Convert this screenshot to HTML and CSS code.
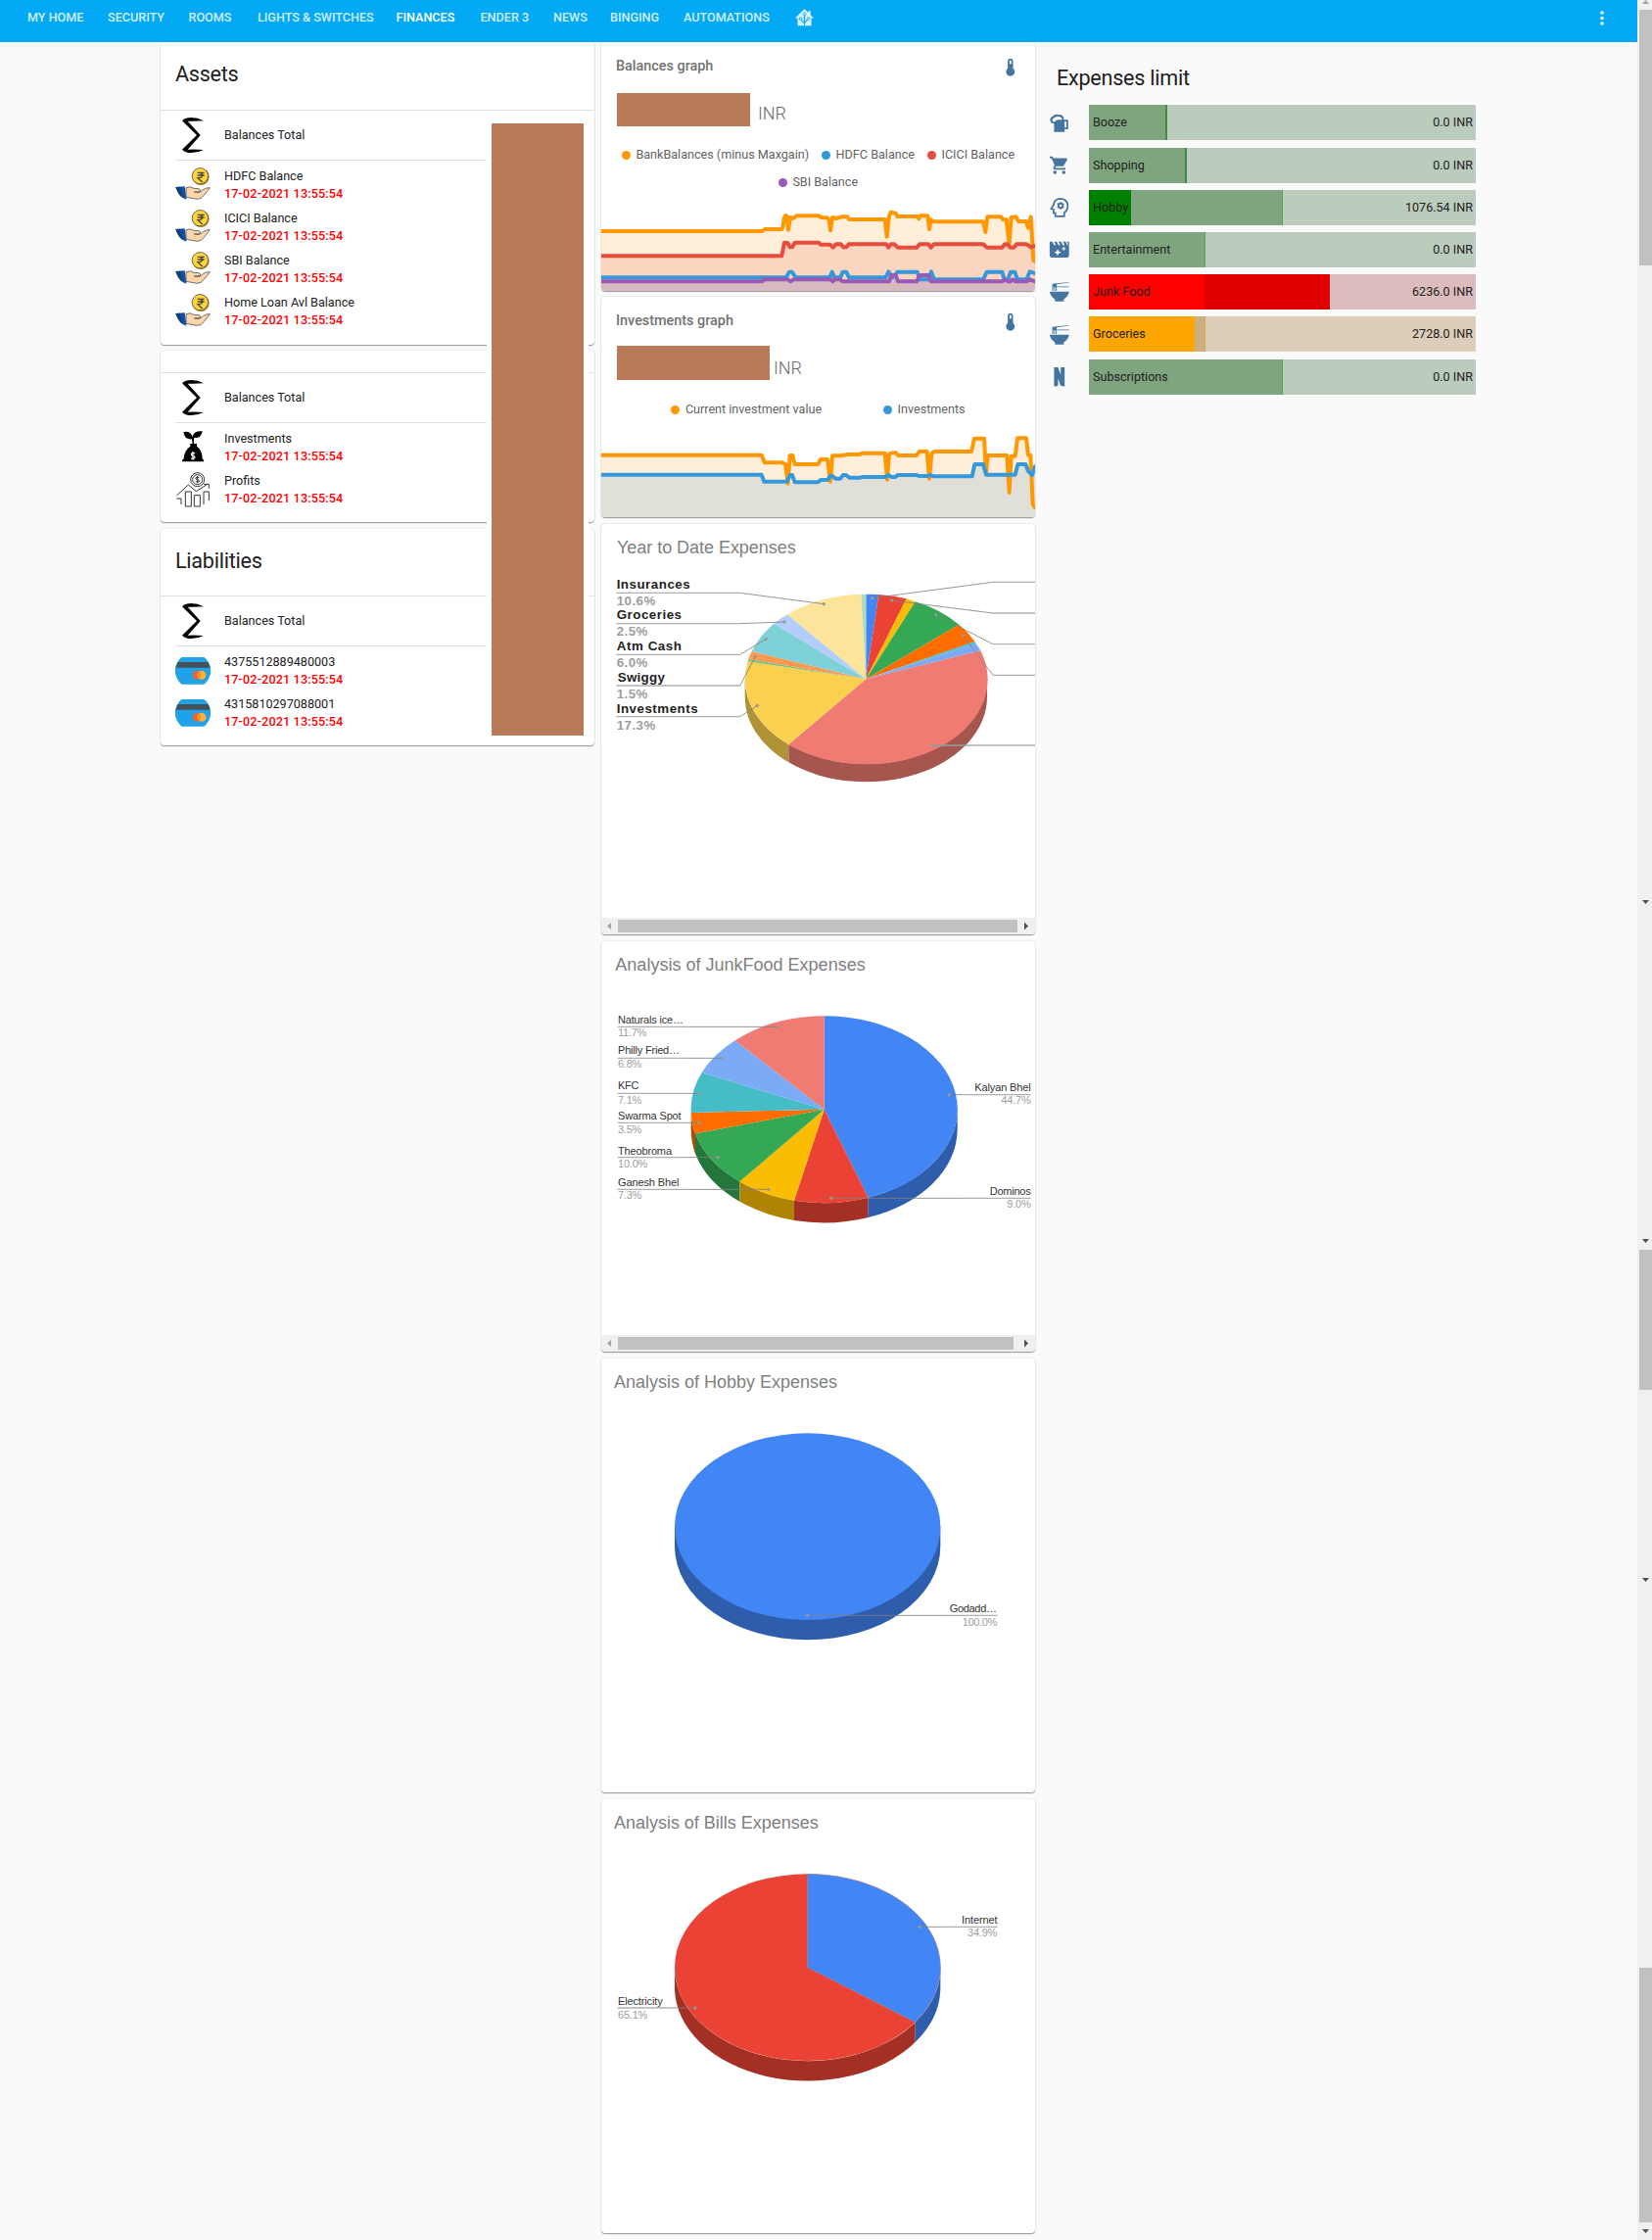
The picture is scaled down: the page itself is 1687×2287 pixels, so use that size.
FILE: index.html
```html
<!DOCTYPE html>
<html lang="en">
<head>
<meta charset="utf-8">
<title>Finances</title>
<link rel="stylesheet" href="styles.css">
</head>
<body>
<svg class="defs" width="0" height="0" aria-hidden="true">
  <symbol id="sigma" viewBox="0 0 108 108"><path d="M87 10Q68 0 49 0Q30 0 21 10L66 54L21 98Q30 108 49 108Q68 108 87 99Q62 96 38 98L77 54L38 11Q62 12 87 10Z"/></symbol>
  <symbol id="hand" viewBox="0 0 108 108">
    <circle cx="78" cy="28" r="26" fill="#a98216"/><circle cx="76" cy="26" r="24.500" fill="#fdd43c" stroke="#555" stroke-width="2.500"/>
    <path d="M68 16H89M68 24H89M69 16H75Q83 17 83 24Q82 32 69 32L83 45" fill="none" stroke="#444" stroke-width="4"/>
    <path d="M33 62Q47 56 57 64L72 65Q80 67 76 74L58 75Q75 80 85 68Q95 61 106 62Q98 73 89 84Q79 97 68 97L33 91Z" fill="#fcd5aa" stroke="#555" stroke-width="2.500"/>
    <path d="M1 60L29 58L34 98Q13 94 1 60Z" fill="#0f50a0"/><path d="M1 60L15 59L22 92Q9 85 1 60Z" fill="#153e74"/>
  </symbol>
  <symbol id="bag" viewBox="0 0 108 108"><path d="M51 28Q28 30 25 7Q44 1 53 20Q58 1 83 4Q81 25 57 25V42H66V50Q83 62 83 88L87 92V97H21V92L26 88Q27 63 46 50V42H53Z"/><path d="M60 72Q54 68 50 72Q47 77 54 79Q62 81 59 86Q55 90 48 86M54 66V92" fill="none" stroke="#fff" stroke-width="3.500"/></symbol>
  <symbol id="profit" viewBox="0 0 108 108"><g fill="none" stroke="#333" stroke-width="3"><circle cx="68" cy="23" r="21"/><circle cx="68" cy="23" r="15"/><path d="M4 72L40 39L64 59L100 36M87 37H103V50M4 81H18V99M31 105V60H49V105ZM58 105V71H76V105ZM87 99V60H103V87"/><path d="M74 18Q68 13 63 17Q60 22 68 23Q76 25 73 29Q68 33 62 28M68 12V34"/></g></symbol>
  <symbol id="credit" viewBox="0 0 108 108"><path d="M20 12H88Q101 20 108 44V63Q101 86 88 95H20Q7 86 0 63V44Q7 20 20 12Z" fill="#1fa2e8"/><path d="M8 27H100Q105 34 106 44H2Q4 34 8 27Z" fill="#455058"/><circle cx="67" cy="67" r="13.500" fill="#f0642f"/><circle cx="81" cy="67" r="13.500" fill="#fbb13c"/><path d="M74 56Q82 67 74 78Q66 67 74 56Z" fill="#f68a1e"/></symbol>
  <symbol id="thermo" viewBox="0 0 24 24"><path d="M15 13V5A3 3 0 0 0 9 5V13A5 5 0 1 0 15 13M12 4A1 1 0 0 1 13 5V8H11V5A1 1 0 0 1 12 4Z"/></symbol>
  <symbol id="mug" viewBox="0 0 24 24"><path d="M2 10A4 4 0 0 1 4.500 4.300Q7 1 11 2.500Q15 1 17 5.500V8H22V19H18V22H6V12Q3 13 2 10ZM18 10V17H20V10ZM4 9Q4.500 11 7 10.300Q8 7.500 12 8H15Q15 4.500 10.500 4.500Q7.500 4 6 6.200Q4 6 4 9Z" fill-rule="evenodd"/></symbol>
  <symbol id="cart" viewBox="0 0 24 24"><path d="M17,18C15.890,18 15,18.890 15,20A2,2 0 0,0 17,22A2,2 0 0,0 19,20C19,18.890 18.100,18 17,18M1,2V4H3L6.600,11.590L5.240,14.040C5.090,14.320 5,14.650 5,15A2,2 0 0,0 7,17H19V15H7.420A0.250,0.250 0 0,1 7.170,14.750C7.170,14.700 7.180,14.660 7.200,14.630L8.100,13H15.550C16.300,13 16.960,12.580 17.300,11.970L20.880,5.500C20.950,5.340 21,5.170 21,5A1,1 0 0,0 20,4H5.210L4.270,2M7,18C5.890,18 5,18.890 5,20A2,2 0 0,0 7,22A2,2 0 0,0 9,20C9,18.890 8.100,18 7,18Z"/></symbol>
  <symbol id="head" viewBox="0 0 24 24"><path d="M7.500 22V18.500H5.500V14.500L2.800 13.500L5.300 9.500Q6 2 13.500 2Q21.500 2.500 21.500 10.500Q21.500 15 17.500 18V22Z" fill="none" stroke="#4474a0" stroke-width="2"/><circle cx="13.500" cy="10" r="2.500" fill="none" stroke="#4474a0" stroke-width="2"/><path d="M12.700 5.800H14.300V14.200H12.700ZM9.500 8.700L10.300 7.300L17.500 11.300L16.700 12.700ZM16.700 7.300L17.500 8.700L10.300 12.700L9.500 11.300Z"/><circle cx="13.500" cy="10" r="1.500" fill="#fafafa"/></symbol>
  <symbol id="movie" viewBox="0 0 24 24"><path d="M1 3H4L6 7H8L6 3H9L11 7H13L11 3H14L16 7H18L16 3H19L21 7H22L20.500 3H23V19Q23 21 21 21H3Q1 21 1 19ZM10 11L9 14L6 15.200L9 16.400L10 19.500L11.200 16.400L14.200 15.200L11.200 14ZM17 8L16.200 10.200L14 11L16.200 11.800L17 14L17.800 11.800L20 11L17.800 10.200Z" fill-rule="evenodd"/></symbol>
  <symbol id="bowl" viewBox="0 0 24 24"><path d="M1 12H23Q22 18 17 20.500V23H7V20.500Q2 18 1 12ZM4 3L23 1V1.700L9 3.500V6H23V7H9V11H8V7H7V11H6V7H5V11H4Z"/></symbol>
  <symbol id="netflix" viewBox="0 0 24 24"><path d="M6 1H10.500L13.500 9.500V1H18V23L13.500 22L10.500 14V22L6 23Z"/></symbol>
</svg>
<div class="page">
  <header class="bar">
    <nav class="tabs">
      <a>MY HOME</a><a>SECURITY</a><a>ROOMS</a><a>LIGHTS &amp; SWITCHES</a><a class="on">FINANCES</a><a>ENDER 3</a><a>NEWS</a><a>BINGING</a><a>AUTOMATIONS</a>
      <a><svg width="19" height="18" viewBox="0 0 24 23"><path d="M12 0L17 5V3H20V8L24 12H21V22H3V12H0Z" fill="#d8f1fe"/><path d="M12 22V6M12 19L7 14M12 18L17 13" fill="none" stroke="#03a9f4" stroke-width="1.500"/><g fill="#d8f1fe" stroke="#03a9f4" stroke-width="1.200"><circle cx="12" cy="7" r="1.700"/><circle cx="7" cy="13" r="1.700"/><circle cx="17" cy="13" r="1.700"/></g></svg></a>
    </nav>
    <svg class="more" width="4" height="16" viewBox="0 0 4 16" fill="#fff"><circle cx="2" cy="2" r="1.800"/><circle cx="2" cy="7.500" r="1.800"/><circle cx="2" cy="13" r="1.800"/></svg>
  </header>
  <main class="columns">
    <section class="col first">
      <article class="card">
        <h2 class="head h69">Assets</h2>
        <div class="total"><svg><use href="#sigma"/></svg><span>Balances Total</span></div>
        <div class="rows">
          <div class="row"><svg><use href="#hand"/></svg><p>HDFC Balance<b>17-02-2021 13:55:54</b></p></div>
          <div class="row"><svg><use href="#hand"/></svg><p>ICICI Balance<b>17-02-2021 13:55:54</b></p></div>
          <div class="row"><svg><use href="#hand"/></svg><p>SBI Balance<b>17-02-2021 13:55:54</b></p></div>
          <div class="row"><svg><use href="#hand"/></svg><p>Home Loan Avl Balance<b>17-02-2021 13:55:54</b></p></div>
        </div>
      </article>
      <article class="card second">
        <div class="head h22"></div>
        <div class="total"><svg><use href="#sigma"/></svg><span>Balances Total</span></div>
        <div class="rows">
          <div class="row"><svg><use href="#bag"/></svg><p>Investments<b>17-02-2021 13:55:54</b></p></div>
          <div class="row"><svg><use href="#profit"/></svg><p>Profits<b>17-02-2021 13:55:54</b></p></div>
        </div>
      </article>
      <article class="card third">
        <h2 class="head h68">Liabilities</h2>
        <div class="total"><svg><use href="#sigma"/></svg><span>Balances Total</span></div>
        <div class="rows">
          <div class="row"><svg><use href="#credit"/></svg><p>4375512889480003<b>17-02-2021 13:55:54</b></p></div>
          <div class="row"><svg><use href="#credit"/></svg><p>4315810297088001<b>17-02-2021 13:55:54</b></p></div>
        </div>
      </article>
      <div class="mask"></div>
    </section>

    <section class="col">
      <article class="card graph g1">
        <div class="gtitle"><span>Balances graph</span><svg><use href="#thermo"/></svg></div>
        <div class="value"><i class="w136"></i><span>INR</span></div>
        <div class="legend l1"><span class="o">BankBalances (minus Maxgain)</span><span class="b">HDFC Balance</span><span class="r">ICICI Balance</span></div>
        <div class="legend l2"><span class="p">SBI Balance</span></div>
        <svg class="plot" height="90" viewBox="42 500 1329 270" preserveAspectRatio="none">
          <path fill="#ffefda" d="M42 587H535L543 581H597L604 541H713L800 551H915L928 530L950 542H1045L1060 557H1215L1225 542H1270L1371 555V770H42Z"/>
          <path fill="#fad5c0" d="M42 663H597L604 622H708L745 632H1371V770H42Z"/>
          <path fill="#d7bac0" d="M42 735H1371V770H42Z"/>
          <g fill="none" stroke-width="12" stroke-linejoin="round" stroke-linecap="round">
          <path stroke="#ff9800" d="M42 587H535L543 581H595Q600 575 602 548Q605 536 611 541L615 583L621 545L630 548L640 540H708L718 546H735Q740 548 744 585L750 545L762 548L778 543H796L801 551H911L917 604L923 545L929 529L944 532L949 542H1010L1015 549L1020 540H1042L1047 581L1052 552L1060 558H1212L1219 590L1225 543H1266L1273 552H1283L1292 626L1298 545L1312 543L1320 557H1343L1350 577L1358 543L1366 677L1372 680"/>
          <path stroke="#e74c3c" d="M42 663H595L603 622H612L620 636H627L635 622H708L714 628H743L752 637L761 627H776L784 636H792L800 627H915L922 637L929 627H940L950 637H1009L1017 627H1044L1052 637L1061 627H1212L1224 637H1270L1278 627H1286L1295 637H1306L1314 627H1345L1358 636L1371 632"/>
          <path stroke="#3498db" d="M42 729H608L618 712H627L637 729H742L749 712L757 729H774L782 712H793L801 729H913L922 711L935 729L950 712H1010L1018 735H1044L1053 711L1062 735H1212L1223 712H1270L1277 735H1288L1296 712H1309L1317 735H1345L1355 711L1371 716"/>
          <path stroke="#9b59b6" d="M42 741H534L542 735H614L622 741L631 735H744L751 741L758 735H774L781 741H924L930 722H944L951 741H1009L1017 722H1045L1052 741H1270L1279 735L1288 741H1295L1303 735L1311 741H1345L1355 735L1371 741"/>
          </g>
        </svg>
      </article>
      <article class="card graph g2">
        <div class="gtitle"><span>Investments graph</span><svg><use href="#thermo"/></svg></div>
        <div class="value v2"><i class="w156"></i><span>INR</span></div>
        <div class="legend l3"><span class="o">Current investment value</span><span class="b">Investments</span></div>
        <svg class="plot" height="88" viewBox="42 451 1329 264" preserveAspectRatio="none">
          <path fill="#ffefda" d="M42 525H535L543 549H600L613 610L624 525L635 554H706L715 538H735L744 605L752 527H780L840 519H910L917 600L924 519H940L950 526H1008L1017 514H1040L1047 598L1057 514H1178L1186 474H1215L1221 525H1285L1292 640L1300 525H1312L1320 474H1343L1350 530L1371 680V715H42Z"/>
          <path fill="#e0e0d8" d="M42 585H535L542 606H706L748 590H1178L1186 553H1212L1220 585H1310L1320 553H1343L1371 565V715H42Z"/>
          <g fill="none" stroke-width="12" stroke-linejoin="round" stroke-linecap="round">
          <path stroke="#ff9800" d="M42 525H533L543 548H596L606 553L614 612L620 526H628L635 553H706L714 538H735L744 606L750 527H775L799 523H833L840 519H911L918 600L924 521L935 518L945 518L951 526H1008L1016 514H1040L1047 597L1054 520L1062 514H1176L1185 474H1215L1221 580L1226 526H1285L1292 640L1298 528H1310L1317 473H1344L1350 525H1357L1364 675L1370 685"/>
          <path stroke="#3498db" d="M42 585H533L541 606H610L621 586H627L635 608H706L714 601H735L744 589H750L760 597H774L783 586H792L802 594H835L843 592H912L921 586L932 592H942L951 586H1008L1015 589H1042L1050 586L1061 590H1178L1186 553H1212L1221 585H1310L1318 553H1342L1350 574L1362 586L1371 560"/>
          </g>
        </svg>
      </article>

      <article class="card pie ytd">
        <svg width="443" height="402" viewBox="42 15 1329 1206">
          <text class="t" x="90" y="105" textLength="548">Year to Date Expenses</text>
          <path fill="#b09335" d="M482 490A371 260 0 0 0 616 690V745A371 260 0 0 1 482 545Z"/>
          <path fill="#a6564e" d="M1224 490A371 260 0 0 1 616 690V745A371 260 0 0 0 1224 545Z"/>
          <path fill="#4285f4" d="M853 490V230A371 260 0 0 1 892 231Z"/>
          <path fill="#ea4335" d="M853 490L892 231A371 260 0 0 1 977 244Z"/>
          <path fill="#fbbc04" d="M853 490L977 244A371 260 0 0 1 1004 253Z"/>
          <path fill="#34a853" d="M853 490L1004 253A371 260 0 0 1 1138 323Z"/>
          <path fill="#ff6d01" d="M853 490L1138 323A371 260 0 0 1 1187 375Z"/>
          <path fill="#46bdc6" d="M853 490L1187 375A371 260 0 0 1 1190 381Z"/>
          <path fill="#7baaf7" d="M853 490L1190 381A371 260 0 0 1 1204 403Z"/>
          <path fill="#f07b72" d="M853 490L1204 403A371 260 0 0 1 616 690Z"/>
          <path fill="#fcd04f" d="M853 490L616 690A371 260 0 0 1 491 436Z"/>
          <path fill="#71c287" d="M853 490L491 436A371 260 0 0 1 493 429Z"/>
          <path fill="#ff994d" d="M853 490L493 429A371 260 0 0 1 503 405Z"/>
          <path fill="#7ed1d7" d="M853 490L503 405A371 260 0 0 1 571 320Z"/>
          <path fill="#b3cefb" d="M853 490L571 320A371 260 0 0 1 612 292Z"/>
          <path fill="#fde49b" d="M853 490L612 292A371 260 0 0 1 838 230Z"/>
          <path fill="#aedcba" d="M853 490L838 230H853Z"/>
          <g class="rule"><path d="M88 226H467M88 320H467M88 415H467M88 510H467M88 605H467M1242 193H1371M1242 288H1371M1242 383H1371M1242 478H1371M1057 693H1371"/></g>
          <g class="lead"><path d="M467 226L724 260M467 320L603 315M467 415L547 367M467 510L514 421M467 605L520 571M872 242L1242 193M932 249L1242 288M1067 293L1242 383M1150 356L1242 478M1057 693H1160"/></g>
          <g class="dots"><circle cx="724" cy="260" r="5"/><circle cx="603" cy="315" r="5"/><circle cx="547" cy="367" r="5"/><circle cx="514" cy="421" r="5"/><circle cx="520" cy="571" r="5"/><circle cx="872" cy="242" r="5"/><circle cx="932" cy="249" r="5"/><circle cx="1067" cy="293" r="5"/><circle cx="1150" cy="356" r="5"/><circle cx="1057" cy="693" r="5"/></g>
          <g class="big"><text x="89" y="213" textLength="225">Insurances</text><text x="89" y="307" textLength="199">Groceries</text><text x="89" y="403" textLength="199">Atm Cash</text><text x="92" y="497" textLength="145">Swiggy</text><text x="89" y="593" textLength="249">Investments</text></g>
          <g class="big pct"><text x="89" y="264" textLength="119">10.6%</text><text x="89" y="358" textLength="95">2.5%</text><text x="89" y="454" textLength="95">6.0%</text><text x="89" y="548" textLength="95">1.5%</text><text x="89" y="644" textLength="119">17.3%</text></g>
        </svg>
        <svg class="hbar" width="443" height="17"><path fill="#c1c1c1" d="M17 2H425V15H17Z"/><path fill="#a3a3a3" d="M6 8.500L10 5V12Z"/><path fill="#505050" d="M436 8.500L432 4.500V12.500Z"/></svg>
      </article>

      <article class="card pie">
        <svg width="443" height="402" viewBox="42 3 1329 1206">
          <text class="t" x="85" y="93" textLength="766">Analysis of JunkFood Expenses</text>
          <path fill="#b34d01" d="M317 518A408 286 0 0 0 330 592V653A408 286 0 0 1 317 579Z"/>
          <path fill="#24763a" d="M330 592A408 286 0 0 0 466 739V800A408 286 0 0 1 330 653Z"/>
          <path fill="#b08403" d="M466 739A408 286 0 0 0 633 797V858A408 286 0 0 1 466 800Z"/>
          <path fill="#a42f25" d="M633 797A408 286 0 0 0 860 788V849A408 286 0 0 1 633 858Z"/>
          <path fill="#2e5dab" d="M860 788A408 286 0 0 0 1133 518V579A408 286 0 0 1 860 849Z"/>
          <path fill="#4285f4" d="M725 518V232A408 286 0 0 1 860 788Z"/>
          <path fill="#ea4335" d="M725 518L860 788A408 286 0 0 1 633 797Z"/>
          <path fill="#fbbc04" d="M725 518L633 797A408 286 0 0 1 466 739Z"/>
          <path fill="#34a853" d="M725 518L466 739A408 286 0 0 1 330 592Z"/>
          <path fill="#ff6d01" d="M725 518L330 592A408 286 0 0 1 317 528Z"/>
          <path fill="#46bdc6" d="M725 518L317 528A408 286 0 0 1 350 405Z"/>
          <path fill="#7baaf7" d="M725 518L350 405A408 286 0 0 1 452 307Z"/>
          <path fill="#f07b72" d="M725 518L452 307A408 286 0 0 1 725 232Z"/>
          <g class="rule"><path d="M92 265H302M92 361H302M92 469H302M92 559H302M92 665H302M92 763H302M1150 473H1358M1150 790H1358"/></g>
          <g class="lead"><path d="M302 265H585M302 361H410M302 469H344M302 559H342M302 665H399M302 763H554M1107 473H1150M746 790H1150"/></g>
          <g class="dots"><circle cx="585" cy="265" r="5"/><circle cx="410" cy="361" r="5"/><circle cx="344" cy="469" r="5"/><circle cx="342" cy="559" r="5"/><circle cx="399" cy="665" r="5"/><circle cx="554" cy="763" r="5"/><circle cx="1107" cy="473" r="5"/><circle cx="746" cy="790" r="5"/></g>
          <g class="lab"><text x="93" y="256" textLength="201">Naturals ice…</text><text x="93" y="349" textLength="189">Philly Fried…</text><text x="93" y="457" textLength="64">KFC</text><text x="93" y="548" textLength="194">Swarma Spot</text><text x="93" y="656" textLength="165">Theobroma</text><text x="93" y="753" textLength="187">Ganesh Bhel</text><text x="1186" y="463" textLength="172">Kalyan Bhel</text><text x="1232" y="780" textLength="126">Dominos</text></g>
          <g class="lab pct"><text x="93" y="295" textLength="88">11.7%</text><text x="93" y="391" textLength="73">6.8%</text><text x="93" y="500" textLength="73">7.1%</text><text x="93" y="590" textLength="73">3.5%</text><text x="93" y="695" textLength="91">10.0%</text><text x="93" y="792" textLength="73">7.3%</text><text x="1267" y="502" textLength="91">44.7%</text><text x="1285" y="819" textLength="73">9.0%</text></g>
        </svg>
        <svg class="hbar" width="443" height="17"><path fill="#c1c1c1" d="M17 2H421V15H17Z"/><path fill="#a3a3a3" d="M6 8.500L10 5V12Z"/><path fill="#505050" d="M436 8.500L432 4.500V12.500Z"/></svg>
      </article>

      <article class="card pie tall">
        <svg width="443" height="443" viewBox="42 21 1329 1329">
          <text class="t" x="81" y="111" textLength="684">Analysis of Hobby Expenses</text>
          <path fill="#2e5dab" d="M267 536V597A407 286 0 0 0 1081 597V536Z"/>
          <ellipse cx="674" cy="536" rx="407" ry="286" fill="#4285f4"/>
          <g class="rule"><path d="M1097 808H1256"/></g><g class="lead"><path d="M674 808H1097"/></g><g class="dots"><circle cx="674" cy="808" r="5"/></g>
          <g class="lab"><text x="1109" y="798" textLength="145">Godadd…</text></g><g class="lab pct"><text x="1148" y="840" textLength="107">100.0%</text></g>
        </svg>
      </article>

      <article class="card pie tall">
        <svg width="443" height="443" viewBox="42 51 1329 1329">
          <text class="t" x="81" y="141" textLength="626">Analysis of Bills Expenses</text>
          <path fill="#a42f25" d="M267 566A407 286 0 0 0 1004 734V795A407 286 0 0 1 267 627Z"/>
          <path fill="#2e5dab" d="M1081 566A407 286 0 0 1 1004 734V795A407 286 0 0 0 1081 627Z"/>
          <ellipse cx="674" cy="566" rx="407" ry="286" fill="#ea4335"/>
          <path fill="#4285f4" stroke="#b8919a" stroke-width="1.500" d="M674 566V280A407 286 0 0 1 1004 734Z"/>
          <g class="rule"><path d="M1097 442H1256M92 690H250"/></g><g class="lead"><path d="M1018 442H1097M250 690H330"/></g><g class="dots"><circle cx="1018" cy="442" r="5"/><circle cx="330" cy="690" r="5"/></g>
          <g class="lab"><text x="1146" y="433" textLength="110">Internet</text><text x="93" y="681" textLength="137">Electricity</text></g><g class="lab pct"><text x="1164" y="472" textLength="91">34.9%</text><text x="93" y="722" textLength="91">65.1%</text></g>
        </svg>
      </article>
    </section>

    <section class="col limits">
      <h2>Expenses limit</h2>
      <div class="limit"><svg><use href="#mug"/></svg><div class="track green"><i class="target thick" style="width:20.250%"></i><span>Booze</span><span>0.0 INR</span></div></div>
      <div class="limit"><svg><use href="#cart"/></svg><div class="track green"><i class="target thick" style="width:25.300%"></i><span>Shopping</span><span>0.0 INR</span></div></div>
      <div class="limit"><svg><use href="#head"/></svg><div class="track green"><i class="target" style="width:50.100%"></i><i class="used" style="width:10.900%"></i><span>Hobby</span><span>1076.54 INR</span></div></div>
      <div class="limit"><svg><use href="#movie"/></svg><div class="track green"><i class="target" style="width:30.130%"></i><span>Entertainment</span><span>0.0 INR</span></div></div>
      <div class="limit"><svg><use href="#bowl"/></svg><div class="track red"><i class="over" style="width:62.300%"></i><i class="used" style="width:29.900%"></i><span>Junk Food</span><span>6236.0 INR</span></div></div>
      <div class="limit"><svg><use href="#bowl"/></svg><div class="track amber"><i class="target" style="width:30.130%"></i><i class="used" style="width:27.350%"></i><span>Groceries</span><span>2728.0 INR</span></div></div>
      <div class="limit"><svg><use href="#netflix"/></svg><div class="track green"><i class="target" style="width:50.100%"></i><span>Subscriptions</span><span>0.0 INR</span></div></div>
    </section>
  </main>
</div>
<aside class="rail"><svg width="15" height="2287"><g fill="#c1c1c1"><path d="M2 10H15V271H2ZM2 1276H15V1419H2ZM2 2009H15V2269H2Z"/></g><path fill="#a3a3a3" d="M5 4L8.500 0L12 4Z"/><path fill="#505050" d="M5 919H12L8.500 923ZM5 1265H12L8.500 1269ZM5 1611H12L8.500 1615ZM5 2276H12L8.500 2280Z"/></svg></aside>
</body>
</html>
```
FILE: styles.css
```css
* { box-sizing: border-box; }
body { margin: 0; display: flex; width: 1687px; height: 2287px; overflow: hidden; background: #fafafa; color: #212121; font: 12.6px/18px Roboto, sans-serif; }
h2, p { margin: 0; font-weight: 400; }
svg { display: block; flex: none; }
.defs { position: absolute; }
.page { width: 1672px; }
.rail { width: 15px; background: #f0f0f0; }

.bar { height: 43px; background: #03a9f4; display: flex; justify-content: space-between; padding: 9px 34px 0 28px; }
.tabs { display: grid; grid-template-columns: 82px 82.5px 70.5px 141.5px 86px 74.5px 58px 75px 113.5px 30px; }
.tabs a { color: #d0effd; font-weight: 500; white-space: nowrap; }
.tabs .on { color: #fff; }
.more { margin-top: 2px; }

.columns { display: grid; grid-template-columns: 443px 443px 443px; column-gap: 7px; padding-left: 164px; }
.card { background: #fff; border-radius: 4px; box-shadow: 0 1px 1px rgba(0,0,0,.38), 0 0 2px rgba(0,0,0,.15); }
.first { position: relative; }
.second { margin-top: 6px; }
.third { margin-top: 7px; }
.head { font-size: 21.6px; letter-spacing: -.012em; padding: 0 15px; line-height: 66px; }
.h69 { height: 69px; }
.h68 { height: 68px; }
.h22 { height: 22px; }
.head + .total { border-top: 1px solid #e0e0e0; }
.total { display: flex; align-items: center; gap: 14px; height: 51px; padding: 7px 15px; }
.total svg, .row svg { width: 36px; height: 36px; }
.rows { margin: 0 15px; border-top: 1px solid #e0e0e0; padding: 7px 0 15px; display: flex; flex-direction: column; gap: 7px; }
.row { display: flex; gap: 14px; height: 36px; }
.row b { display: block; color: #f00; font-weight: 500; letter-spacing: .15px; }
.card:first-child .rows { padding-bottom: 16px; }
.mask { position: absolute; left: 333px; top: 79px; width: 104px; height: 634px; background: #b97a57; border: 4px solid #fff; border-width: 4px 5px 5px; }

.graph { overflow: hidden; color: #636363; }
.g1 { height: 254px; }
.g2 { height: 225px; margin-top: 6px; }
.gtitle { display: flex; justify-content: space-between; height: 42px; padding: 15px 14px 0 15px; font-size: 14.4px; font-weight: 500; color: #727272; }
.gtitle span { padding-top: 1px; }
.gtitle svg { width: 21.6px; height: 21.6px; fill: #4474a0; }
.value { display: flex; gap: 8px; height: 59px; padding: 10px 0 0 16px; font-size: 18px; color: #6c6c6c; font-weight: 300; }
.value i { height: 34px; background: #b97a57; }
.value span { padding-top: 12px; }
.w136 { width: 136px; }
.w156 { width: 156px; }
.v2 { gap: 4px; padding-top: 8px; }
.v2 i { height: 35px; }
.v2 span { padding-top: 14px; }
.legend { display: flex; height: 28px; align-items: center; justify-content: center; }
.legend span { display: flex; align-items: center; gap: 5.5px; white-space: nowrap; }
.legend span::before { content: ""; width: 9px; height: 9px; border-radius: 50%; background: currentColor; }
.legend .o::before { background: #ff9800; }
.legend .b::before { background: #3498db; }
.legend .r::before { background: #e74c3c; }
.legend .p::before { background: #9b59b6; }
.l1 { gap: 13px; }
.l2 { height: 35px; padding-bottom: 7px; }
.l3 { gap: 63px; height: 36px; padding-bottom: 8px; }
.plot { width: 443px; }

.pie { margin-top: 7px; overflow: hidden; font-family: "Liberation Sans", Arial, sans-serif; }
.tall svg { height: 443px; }
.t { font-size: 54px; fill: #808080; }
.big { font-size: 40px; font-weight: bold; fill: #222; }
.lab { font-size: 33px; fill: #333; }
.pct { fill: #9e9e9e; }
.rule { fill: none; stroke: #b0b0b0; stroke-width: 4; }
.lead { fill: none; stroke: #808080; stroke-width: 2.5; }
.dots { fill: #999; }
.hbar { background: #f0f0f0; }

.limits { padding-top: 23px; }
.limits h2 { font-size: 21.6px; line-height: 28px; letter-spacing: -.012em; padding-left: 15px; margin-bottom: 13.4px; }
.limit { display: flex; align-items: center; gap: 19px; height: 36px; padding-left: 7.4px; margin-bottom: 7.2px; }
.limit svg { width: 21.6px; height: 21.6px; fill: #4474a0; }
.track { position: relative; flex: 1; height: 36px; display: flex; align-items: center; justify-content: space-between; padding: 0 3px 0 4px; }
.track span { position: relative; }
.track i { position: absolute; left: 0; top: 0; height: 100%; }
.green { background: #bbcbbc; }
.green .target { background: #7fa57f; border-right: 1px solid #5f9a60; }
.green .thick { border-right: 2px solid #438a45; }
.green .used { background: #008000; }
.red { background: #dcbcbd; }
.red .over { background: #e00000; }
.red .used { background: #f00; }
.amber { background: #dccdb9; }
.amber .target { background: #ccae7f; border-right: 1px solid #d5a455; }
.amber .used { background: #ffa500; }
```
